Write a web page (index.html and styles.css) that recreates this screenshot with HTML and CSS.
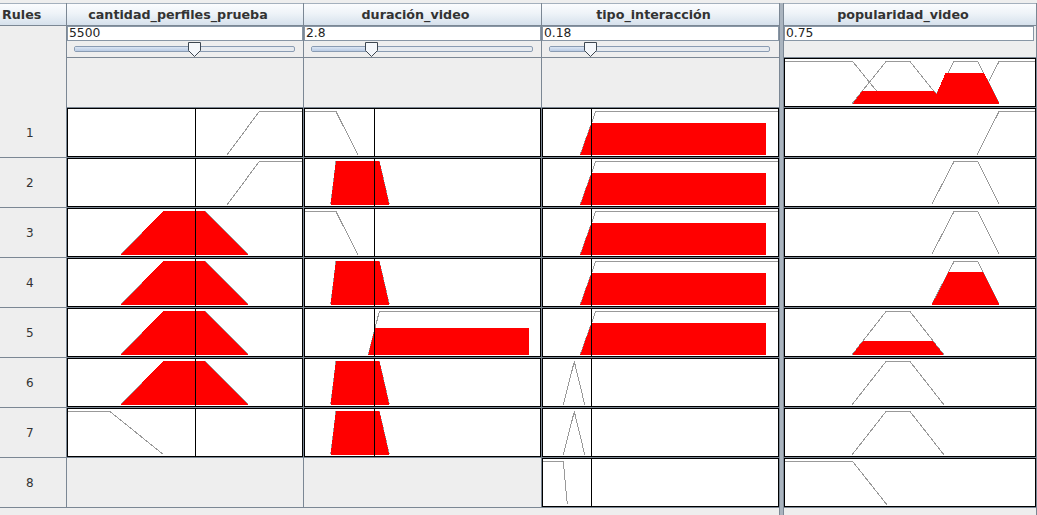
FILE: index.html
```html
<!DOCTYPE html>
<html>
<head>
<meta charset="utf-8">
<title>Rule viewer</title>
<link rel="stylesheet" href="styles.css">
</head>
<body>
<svg class="defs" width="0" height="0">
  <defs>
    <g id="c1-ramp"><polyline class="mf" points="159.3,45.5 191.3,2.5 234,2.5"/><rect class="vl" x="127" y="0" width="1" height="47"/></g>
    <g id="c1-trap"><polyline class="mf" points="52.7,45.5 95.3,2.5 137,2.5 180.3,45.5"/><polygon class="act" points="52.7,46 95.3,2 137,2 180.3,46"/><rect class="vl" x="127" y="0" width="1" height="47"/></g>
    <g id="c1-dec"><polyline class="mf" points="0,2.5 42,2.5 95.3,45.5"/><rect class="vl" x="127" y="0" width="1" height="47"/></g>

    <g id="c2-dec"><polyline class="mf" points="0,2.5 31,2.5 52.7,45.5"/><rect class="vl" x="69" y="0" width="1" height="47"/></g>
    <g id="c2-trap"><polyline class="mf" points="25.7,45.5 31,2.5 74.3,2.5 84.3,45.5"/><polygon class="act" points="25.7,46 31,2 74.3,2 84.3,46"/><rect class="vl" x="69" y="0" width="1" height="47"/></g>
    <g id="c2-r5"><polyline class="mf" points="63.3,45.5 74.3,2.5 235,2.5"/><polygon class="act" points="63.3,46 70.1,19 224,19 224,46"/><rect class="vl" x="69" y="0" width="1" height="47"/></g>

    <g id="c3-ramp"><polyline class="mf" points="37.3,45.5 52.7,2.5 235,2.5"/><polygon class="act" points="37.3,46 48.6,14 223,14 223,46"/><rect class="vl" x="48" y="0" width="1" height="47"/></g>
    <g id="c3-tri"><polyline class="mf" points="20.3,45.5 31.3,2.5 41.7,45.5"/><rect class="vl" x="48" y="0" width="1" height="47"/></g>
    <g id="c3-r8"><polyline class="mf" points="0,2.5 20.3,2.5 24.3,45.5"/><rect class="vl" x="48" y="0" width="1" height="47"/></g>

    <g id="c4-vh"><polyline class="mf" points="192.3,45.5 214,2.5 250,2.5"/></g>
    <g id="c4-high"><polyline class="mf" points="146.7,45.5 169,2.5 192.7,2.5 214.3,45.5"/></g>
    <g id="c4-high-act"><polyline class="mf" points="146.7,45.5 169,2.5 192.7,2.5 214.3,45.5"/><polygon class="act" points="146.7,46 163.6,13 197.9,13 214.3,46"/></g>
    <g id="c4-med"><polyline class="mf" points="67.3,45.5 101,2.5 125,2.5 158.7,45.5"/></g>
    <g id="c4-med-act"><polyline class="mf" points="67.3,45.5 101,2.5 125,2.5 158.7,45.5"/><polygon class="act" points="67.3,46 77.9,32 148.1,32 158.7,46"/></g>
    <g id="c4-low"><polyline class="mf" points="0,2.5 67.7,2.5 101.7,45.5"/></g>
    <g id="c4-agg">
      <polyline class="mf" points="0,2.5 67.7,2.5 101.7,44.5"/>
      <polyline class="mf" points="67.3,44.5 101,2.5 125,2.5 158.7,44.5"/>
      <polyline class="mf" points="146.7,44.5 169,2.5 192.7,2.5 214.3,44.5"/>
      <polyline class="mf" points="192.3,44.5 214,2.5 250,2.5"/>
      <polygon class="act" points="67.7,45 77.3,31.7 148.7,31.7 151.5,35.2 160.7,13.5 199,13.5 214.3,45"/>
    </g>
  </defs>
</svg>

<div class="app">
  <div class="col rules">
    <div class="hdr hdr-left">Rules</div>
    <div class="rules-spacer"></div>
    <div class="rlabel">1</div>
    <div class="rlabel">2</div>
    <div class="rlabel">3</div>
    <div class="rlabel">4</div>
    <div class="rlabel">5</div>
    <div class="rlabel">6</div>
    <div class="rlabel">7</div>
    <div class="rlabel">8</div>
  </div>

  <div class="col in c1">
    <div class="hdr">cantidad_perfiles_prueba</div>
    <div class="field">5500</div>
    <div class="slider">
      <div class="track"><div class="fill" style="width:120px"></div></div>
      <svg class="thumb" style="left:120px" viewBox="0 0 15 16"><path d="M1.5 0.5 H13.5 V8.5 L7.5 14.5 L1.5 8.5 Z"/></svg>
    </div>
    <div class="blank"></div>
    <div class="cell"><div class="box"><svg class="plot" viewBox="0 0 234 47"><use href="#c1-ramp"/></svg></div></div>
    <div class="cell"><div class="box"><svg class="plot" viewBox="0 0 234 47"><use href="#c1-ramp"/></svg></div></div>
    <div class="cell"><div class="box"><svg class="plot" viewBox="0 0 234 47"><use href="#c1-trap"/></svg></div></div>
    <div class="cell"><div class="box"><svg class="plot" viewBox="0 0 234 47"><use href="#c1-trap"/></svg></div></div>
    <div class="cell"><div class="box"><svg class="plot" viewBox="0 0 234 47"><use href="#c1-trap"/></svg></div></div>
    <div class="cell"><div class="box"><svg class="plot" viewBox="0 0 234 47"><use href="#c1-trap"/></svg></div></div>
    <div class="cell"><div class="box"><svg class="plot" viewBox="0 0 234 47"><use href="#c1-dec"/></svg></div></div>
    <div class="cell"></div>
  </div>

  <div class="col in c2">
    <div class="hdr">duración_video</div>
    <div class="field">2.8</div>
    <div class="slider">
      <div class="track"><div class="fill" style="width:60px"></div></div>
      <svg class="thumb" style="left:60px" viewBox="0 0 15 16"><path d="M1.5 0.5 H13.5 V8.5 L7.5 14.5 L1.5 8.5 Z"/></svg>
    </div>
    <div class="blank"></div>
    <div class="cell"><div class="box"><svg class="plot" viewBox="0 0 235 47"><use href="#c2-dec"/></svg></div></div>
    <div class="cell"><div class="box"><svg class="plot" viewBox="0 0 235 47"><use href="#c2-trap"/></svg></div></div>
    <div class="cell"><div class="box"><svg class="plot" viewBox="0 0 235 47"><use href="#c2-dec"/></svg></div></div>
    <div class="cell"><div class="box"><svg class="plot" viewBox="0 0 235 47"><use href="#c2-trap"/></svg></div></div>
    <div class="cell"><div class="box"><svg class="plot" viewBox="0 0 235 47"><use href="#c2-r5"/></svg></div></div>
    <div class="cell"><div class="box"><svg class="plot" viewBox="0 0 235 47"><use href="#c2-trap"/></svg></div></div>
    <div class="cell"><div class="box"><svg class="plot" viewBox="0 0 235 47"><use href="#c2-trap"/></svg></div></div>
    <div class="cell"></div>
  </div>

  <div class="col in c3">
    <div class="hdr">tipo_interacción</div>
    <div class="field">0.18</div>
    <div class="slider">
      <div class="track"><div class="fill" style="width:41px"></div></div>
      <svg class="thumb" style="left:41px" viewBox="0 0 15 16"><path d="M1.5 0.5 H13.5 V8.5 L7.5 14.5 L1.5 8.5 Z"/></svg>
    </div>
    <div class="blank"></div>
    <div class="cell"><div class="box"><svg class="plot" viewBox="0 0 235 47"><use href="#c3-ramp"/></svg></div></div>
    <div class="cell"><div class="box"><svg class="plot" viewBox="0 0 235 47"><use href="#c3-ramp"/></svg></div></div>
    <div class="cell"><div class="box"><svg class="plot" viewBox="0 0 235 47"><use href="#c3-ramp"/></svg></div></div>
    <div class="cell"><div class="box"><svg class="plot" viewBox="0 0 235 47"><use href="#c3-ramp"/></svg></div></div>
    <div class="cell"><div class="box"><svg class="plot" viewBox="0 0 235 47"><use href="#c3-ramp"/></svg></div></div>
    <div class="cell"><div class="box"><svg class="plot" viewBox="0 0 235 47"><use href="#c3-tri"/></svg></div></div>
    <div class="cell"><div class="box"><svg class="plot" viewBox="0 0 235 47"><use href="#c3-tri"/></svg></div></div>
    <div class="cell"><div class="box"><svg class="plot" viewBox="0 0 235 47"><use href="#c3-r8"/></svg></div></div>
  </div>

  <div class="divider"></div>

  <div class="col out">
    <div class="hdr">popularidad_video</div>
    <div class="field">0.75</div>
    <div class="gap"></div>
    <div class="cell"><div class="box"><svg class="plot" viewBox="0 0 250 47"><use href="#c4-agg"/></svg></div></div>
    <div class="cell"><div class="box"><svg class="plot" viewBox="0 0 250 47"><use href="#c4-vh"/></svg></div></div>
    <div class="cell"><div class="box"><svg class="plot" viewBox="0 0 250 47"><use href="#c4-high"/></svg></div></div>
    <div class="cell"><div class="box"><svg class="plot" viewBox="0 0 250 47"><use href="#c4-high"/></svg></div></div>
    <div class="cell"><div class="box"><svg class="plot" viewBox="0 0 250 47"><use href="#c4-high-act"/></svg></div></div>
    <div class="cell"><div class="box"><svg class="plot" viewBox="0 0 250 47"><use href="#c4-med-act"/></svg></div></div>
    <div class="cell"><div class="box"><svg class="plot" viewBox="0 0 250 47"><use href="#c4-med"/></svg></div></div>
    <div class="cell"><div class="box"><svg class="plot" viewBox="0 0 250 47"><use href="#c4-med"/></svg></div></div>
    <div class="cell"><div class="box"><svg class="plot" viewBox="0 0 250 47"><use href="#c4-low"/></svg></div></div>
  </div>
</div>
</body>
</html>
```

FILE: styles.css
```css
* { box-sizing: border-box; }

html, body {
  margin: 0;
  padding: 0;
}

body {
  width: 1037px;
  height: 515px;
  overflow: hidden;
  background: #eeeeee;
  font-family: "DejaVu Sans", "Noto Sans", sans-serif;
  font-size: 12px;
  color: #333333;
}

.defs {
  position: absolute;
  width: 0;
  height: 0;
}

.app {
  display: flex;
  align-items: stretch;
  height: 515px;
  padding-top: 3px;
}

.col {
  display: flex;
  flex-direction: column;
  height: 505px;
  flex: none;
}

.rules { width: 67px; border-right: 1px solid #7b8794; }
.c1 { width: 237px; border-right: 1px solid #7b8794; }
.c2 { width: 238px; border-right: 1px solid #7b8794; }
.c3 { width: 237px; }
.out { width: 253px; border-right: 1px solid #7b8794; height: 512px; }

.divider {
  flex: none;
  width: 5px;
  height: 512px;
  background: #aab4bf;
  border-left: 1px solid #7b8794;
  border-right: 1px solid #7b8794;
}

.hdr {
  height: 23px;
  flex: none;
  border-top: 1px solid #a4b0bd;
  border-bottom: 1px solid #7b8794;
  background: linear-gradient(to bottom, #fbfcfe 0%, #eef3f8 45%, #d6e1ec 100%);
  font-weight: bold;
  font-size: 12.7px;
  line-height: 22px;
  text-align: center;
  padding-right: 14px;
  color: #333333;
  white-space: nowrap;
}

.hdr-left {
  text-align: left;
  padding-left: 2px;
  padding-right: 0;
}

.rules-spacer {
  height: 82px;
  flex: none;
}

.rlabel {
  height: 50px;
  flex: none;
  border-bottom: 1px solid #7b8794;
  display: flex;
  align-items: center;
  padding-left: 26px;
  font-size: 12px;
  color: #333333;
}

.field {
  height: 15px;
  flex: none;
  background: #ffffff;
  border: 1px solid #8896a5;
  font-size: 12.3px;
  line-height: 13px;
  padding-left: 1px;
  color: #222222;
  white-space: nowrap;
}

.out .field { margin-right: 2px; }

.slider {
  position: relative;
  height: 17px;
  flex: none;
  border-bottom: 1px solid #7b8794;
  padding: 5px 8px 0 7px;
}

.c3 .slider { padding-right: 9px; }

.track {
  height: 6px;
  border: 1px solid #8a9cb3;
  border-radius: 2px;
  background: #e6eaef;
  overflow: hidden;
}

.fill {
  height: 100%;
  background: linear-gradient(to bottom, #dbe5f3, #b9cbe4);
  border-right: 1px solid #7d93b8;
}

.thumb {
  position: absolute;
  top: 1px;
  width: 15px;
  height: 16px;
  overflow: visible;
}

.thumb path {
  fill: #f4f7fb;
  stroke: #3c4650;
  stroke-width: 1;
}

.blank {
  height: 50px;
  flex: none;
  border-bottom: 1px solid #7b8794;
}

.gap {
  height: 17px;
  flex: none;
  border-bottom: 1px solid #7b8794;
}

.cell {
  height: 50px;
  flex: none;
  border-bottom: 1px solid #7b8794;
}

.box {
  height: 49px;
  background: #ffffff;
  border: 1px solid #000000;
}

.plot {
  display: block;
  width: 100%;
  height: 47px;
}

.mf {
  fill: none;
  stroke: #999999;
  stroke-width: 1;
  shape-rendering: crispEdges;
}

.act {
  fill: #ff0000;
  stroke: none;
  shape-rendering: crispEdges;
}

.vl {
  fill: #000000;
  shape-rendering: crispEdges;
}
```
